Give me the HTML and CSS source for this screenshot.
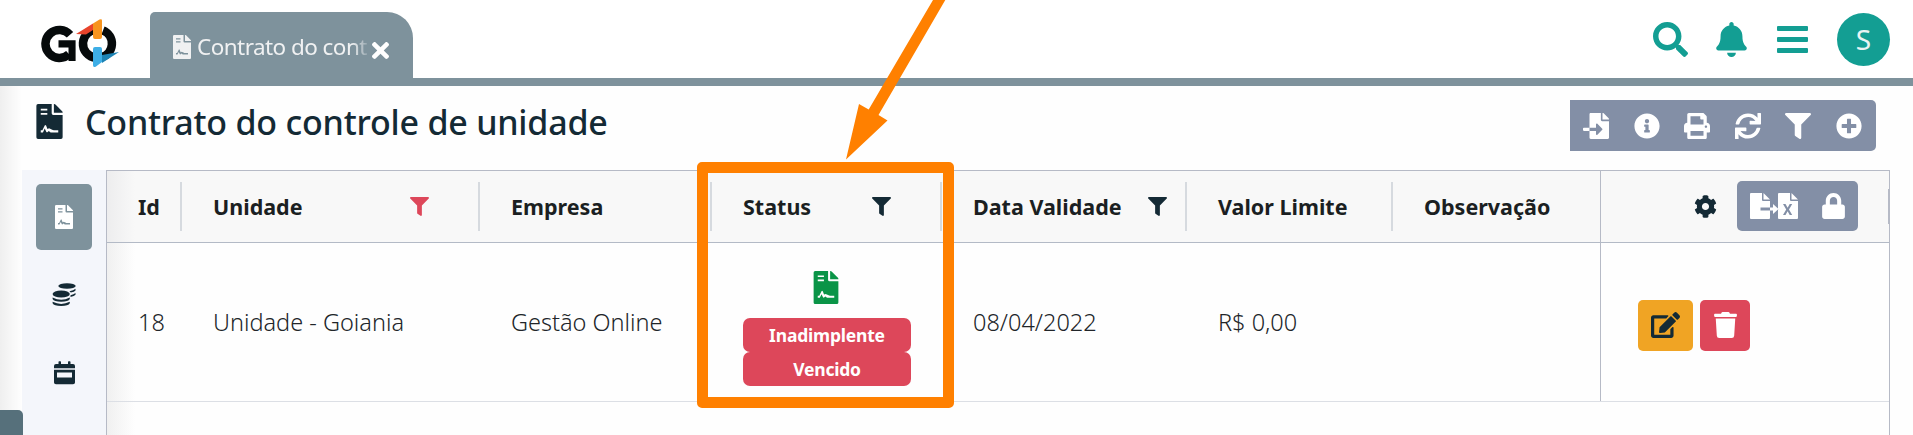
FILE: index.html
```html
<!DOCTYPE html>
<html lang="pt-BR">
<head>
<meta charset="utf-8">
<title>Contrato do controle de unidade</title>
<link rel="stylesheet" href="styles.css">
</head>
<body>
<svg class="defs" width="0" height="0">
  <symbol id="contract" viewBox="0 0 384 512"><path fill-rule="evenodd" d="M24 0H224V136Q224 160 248 160H384V488Q384 512 360 512H24Q0 512 0 488V24Q0 0 24 0ZM64 68V94H160V68ZM64 132V158H160V132ZM64 384V416H96L122 360L146 408Q152 418 162 412L182 396L208 416H320V384H258Q240 384 224 372L186 356L162 366L142 316Q132 296 122 316L88 384Z"/><path d="M256 0H262Q272 0 279 7L377 105Q384 112 384 122V128H256Z"/></symbol>
  <symbol id="filter" viewBox="0 0 512 512"><path d="M487.976 0H24.028C2.71 0-8.047 25.866 7.058 40.971L192 225.941V432c0 7.831 3.821 15.17 10.237 19.662l80 55.98C298.02 518.69 320 507.493 320 487.98V225.941l184.947-184.97C520.021 25.896 509.338 0 487.976 0z"/></symbol>
</svg>

<header class="topbar">
  <div class="logo">
    <svg width="80" height="50" viewBox="0 0 80 50">
      <path d="M29 16.700A14 14 0 1 0 28 36.200" fill="none" stroke="#060a0b" stroke-width="8.500"/>
      <path d="M17.500 22.200H34.600V43H27.500V29.500H17.500Z" fill="#060a0b"/>
      <path d="M57 11.700A14 14 0 0 0 55 39.700M62 12.500A14 14 0 0 1 60 39.200" fill="none" stroke="#060a0b" stroke-width="8.500"/>
      <path d="M51.500 17.500V34M61.500 17.500V34" fill="none" stroke="#fff" stroke-width="1"/>
      <path d="M35 16L52 5.500V12L45 16.500Z" fill="#e8442c"/>
      <path d="M52 5.500L58.500 1.500Q61 .5 61 2.500V19Q61 21 59 21H54Q52 21 52 19Z" fill="#f7941f"/>
      <path d="M61 37L78 34L61 45Z" fill="#1d83b4"/>
      <path d="M54 29H59Q61 29 61 31V44L55 48.500Q52 50 52 47V31Q52 29 54 29Z" fill="#3eaee6"/>
    </svg>
  </div>
  <div class="tab">
    <svg class="tab-icon"><use href="#contract"/></svg>
    <span class="tab-text">Contrato do cont</span>
    <svg class="tab-close" viewBox="0 80 352 352"><path d="M242.720 256l100.070-100.070c12.280-12.280 12.280-32.190 0-44.480l-22.240-22.240c-12.280-12.280-32.190-12.280-44.480 0L176 189.280 75.930 89.210c-12.280-12.280-32.190-12.280-44.480 0L9.210 111.450c-12.280 12.280-12.280 32.190 0 44.480L109.280 256 9.210 356.070c-12.280 12.280-12.280 32.190 0 44.480l22.240 22.240c12.280 12.280 32.200 12.280 44.480 0L176 322.720l100.070 100.070c12.280 12.280 32.200 12.280 44.480 0l22.240-22.240c12.280-12.280 12.280-32.190 0-44.480L242.720 256z"/></svg>
  </div>
  <div class="top-actions">
    <svg width="35" height="35" viewBox="0 0 512 512"><path d="M505 442.700L405.300 343c-4.500-4.500-10.600-7-17-7H372c27.600-35.300 44-79.700 44-128C416 93.100 322.900 0 208 0S0 93.100 0 208s93.100 208 208 208c48.300 0 92.700-16.400 128-44v16.300c0 6.400 2.500 12.500 7 17l99.700 99.700c9.400 9.400 24.600 9.400 33.900 0l28.300-28.300c9.400-9.400 9.400-24.600.1-34zM208 336c-70.700 0-128-57.200-128-128 0-70.700 57.200-128 128-128 70.700 0 128 57.200 128 128 0 70.700-57.200 128-128 128z"/></svg>
    <svg width="31" height="35" viewBox="0 0 448 512"><path d="M224 512c35.320 0 63.970-28.650 63.970-64H160.030c0 35.350 28.650 64 63.970 64zm215.390-149.710c-19.320-20.760-55.470-51.990-55.470-154.290 0-77.700-54.480-139.900-127.940-155.160V32c0-17.670-14.320-32-31.980-32s-31.980 14.330-31.980 32v20.840C118.560 68.100 64.080 130.300 64.080 208c0 102.300-36.150 133.530-55.470 154.290-6 6.450-8.660 14.160-8.610 21.710.11 16.400 12.980 32 32.100 32h383.800c19.120 0 32-15.600 32.100-32 .05-7.550-2.610-15.270-8.610-21.710z"/></svg>
    <svg width="31" height="27" viewBox="0 0 31 27"><path d="M1 0H30Q31 0 31 1V4Q31 5 30 5H1Q0 5 0 4V1Q0 0 1 0ZM1 11H30Q31 11 31 12V15Q31 16 30 16H1Q0 16 0 15V12Q0 11 1 11ZM1 22H30Q31 22 31 23V26Q31 27 30 27H1Q0 27 0 26V23Q0 22 1 22Z"/></svg>
    <div class="avatar">S</div>
  </div>
</header>

<div class="title-row">
  <svg class="title-icon"><use href="#contract"/></svg>
  <h1>Contrato do controle de unidade</h1>
  <div class="toolbar">
    <svg viewBox="0 0 512 512"><path d="M16 288c-8.800 0-16 7.200-16 16v32c0 8.800 7.200 16 16 16h112v-64zm489-183L407.100 7c-4.500-4.500-10.600-7-17-7H384v128h128v-6.100c0-6.300-2.500-12.400-7-16.900zm-153 31V0H152c-13.300 0-24 10.700-24 24v264h128v-65.200c0-14.300 17.300-21.400 27.400-11.300L379 308c6.600 6.700 6.600 17.400 0 24l-95.700 96.400c-10.100 10.100-27.400 3-27.400-11.300V352H128v136c0 13.300 10.700 24 24 24h336c13.300 0 24-10.700 24-24V160H376c-13.200 0-24-10.800-24-24z"/></svg>
    <svg viewBox="0 0 512 512"><path d="M256 8C119.043 8 8 119.083 8 256c0 136.997 111.043 248 248 248s248-111.003 248-248C504 119.083 392.957 8 256 8zm0 110c23.196 0 42 18.804 42 42s-18.804 42-42 42-42-18.804-42-42 18.804-42 42-42zm56 254c0 6.627-5.373 12-12 12h-88c-6.627 0-12-5.373-12-12v-24c0-6.627 5.373-12 12-12h12v-64h-12c-6.627 0-12-5.373-12-12v-24c0-6.627 5.373-12 12-12h64c6.627 0 12 5.373 12 12v100h12c6.627 0 12 5.373 12 12v24z"/></svg>
    <svg viewBox="0 0 512 512"><path d="M448 192V77.250c0-8.490-3.370-16.620-9.370-22.630L393.370 9.370c-6-6-14.140-9.370-22.630-9.370H96C78.330 0 64 14.330 64 32v160c-35.350 0-64 28.650-64 64v112c0 8.840 7.160 16 16 16h48v96c0 17.670 14.330 32 32 32h320c17.670 0 32-14.330 32-32v-96h48c8.840 0 16-7.160 16-16V256c0-35.350-28.650-64-64-64zm-64 256H128v-96h256v96zm0-224H128V64h192v48c0 8.840 7.160 16 16 16h48v96zm48 72c-13.250 0-24-10.750-24-24 0-13.260 10.750-24 24-24s24 10.740 24 24c0 13.250-10.750 24-24 24z"/></svg>
    <svg viewBox="0 0 512 512"><path d="M440.650 12.570l4 82.770A247.160 247.160 0 0 0 255.830 8C134.730 8 33.910 94.920 12.290 209.820A12 12 0 0 0 24.090 224h49.050a12 12 0 0 0 11.670-9.260 175.910 175.910 0 0 1 317-56.940l-101.460-4.860a12 12 0 0 0-12.570 12v47.410a12 12 0 0 0 12 12H500a12 12 0 0 0 12-12V12a12 12 0 0 0-12-12h-47.370a12 12 0 0 0-11.980 12.570zM255.830 432a175.610 175.610 0 0 1-146-77.800l101.800 4.870a12 12 0 0 0 12.570-12v-47.400a12 12 0 0 0-12-12H12a12 12 0 0 0-12 12V500a12 12 0 0 0 12 12h47.350a12 12 0 0 0 12-12.600l-4.150-82.570A247.170 247.170 0 0 0 255.830 504c121.110 0 221.930-86.920 243.550-201.820a12 12 0 0 0-11.800-14.180h-49.050a12 12 0 0 0-11.670 9.260A175.860 175.860 0 0 1 255.830 432z"/></svg>
    <svg><use href="#filter"/></svg>
    <svg viewBox="0 0 512 512"><path d="M256 8C119 8 8 119 8 256s111 248 248 248 248-111 248-248S393 8 256 8zm144 276c0 6.600-5.400 12-12 12h-92v92c0 6.600-5.400 12-12 12h-56c-6.600 0-12-5.400-12-12v-92h-92c-6.600 0-12-5.400-12-12v-56c0-6.600 5.400-12 12-12h92v-92c0-6.600 5.400-12 12-12h56c6.600 0 12 5.400 12 12v92h92c6.600 0 12 5.400 12 12v56z"/></svg>
  </div>
</div>

<main class="content">
  <nav class="side">
    <div class="side-item active"><svg width="18" height="24"><use href="#contract"/></svg></div>
    <div class="side-item"><svg width="24" height="24" viewBox="0 0 24 24"><ellipse cx="15" cy="3" rx="8.700" ry="2.800"/><path d="M17.500 8.200Q21.500 7.700 23.500 5.800V7.400Q22.500 9 18.800 9.600ZM18.500 12.200Q21.800 11.600 23.500 10V11.800Q22.500 13.400 18.500 14Z"/><ellipse cx="9.200" cy="11" rx="8.600" ry="3.600"/><path d="M.6 14.400Q9.200 19 17.800 14.400V16Q16.500 18.700 9.200 18.700T.6 16ZM.6 18.800Q9.200 23 17.800 18.800V20.300Q16.500 23 9.200 23T.6 20.300Z"/></svg></div>
    <div class="side-item"><svg width="21" height="24" viewBox="0 0 21 24"><path fill-rule="evenodd" d="M4.500 3V1Q4.500.3 5.200.3H6.300Q7 .3 7 1V3H14V1Q14 .3 14.700.3H15.800Q16.500.3 16.500 1V3H19Q21 3 21 5V7.300H0V5Q0 3 2 3ZM0 8.800H21V21.500Q21 23.300 19 23.300H2Q0 23.300 0 21.500ZM3 11.500V16.500H18V11.500Z"/></svg></div>
  </nav>
  <div class="grid">
    <div class="row head">
      <div class="cell c-id">Id</div>
      <div class="cell c-un"><span>Unidade</span><svg class="flt red"><use href="#filter"/></svg></div>
      <div class="cell c-em">Empresa</div>
      <div class="cell c-st"><span>Status</span><svg class="flt"><use href="#filter"/></svg></div>
      <div class="cell c-dt"><span>Data Validade</span><svg class="flt"><use href="#filter"/></svg></div>
      <div class="cell c-vl">Valor Limite</div>
      <div class="cell c-ob">Observação</div>
      <div class="cell c-ac">
        <svg class="gear" viewBox="0 0 512 512"><path d="M487.400 315.700l-42.600-24.600c4.300-23.200 4.300-47 0-70.200l42.600-24.600c4.900-2.800 7.100-8.600 5.500-14-11.100-35.600-30-67.800-54.700-94.600-3.800-4.100-10-5.100-14.800-2.300L380.800 110c-17.900-15.400-38.500-27.300-60.800-35.100V25.800c0-5.600-3.900-10.500-9.400-11.700-36.700-8.200-74.300-7.800-109.200 0-5.500 1.200-9.400 6.100-9.400 11.700V75c-22.200 7.900-42.800 19.800-60.800 35.100L88.700 85.500c-4.900-2.800-11-1.900-14.800 2.300-24.700 26.700-43.600 58.900-54.700 94.600-1.700 5.400.6 11.200 5.500 14L67.300 221c-4.300 23.200-4.300 47 0 70.200l-42.600 24.600c-4.900 2.800-7.100 8.600-5.500 14 11.100 35.600 30 67.800 54.700 94.600 3.800 4.100 10 5.100 14.800 2.300l42.600-24.600c17.900 15.400 38.500 27.300 60.800 35.100v49.200c0 5.600 3.900 10.500 9.400 11.700 36.700 8.200 74.300 7.800 109.200 0 5.500-1.200 9.400-6.100 9.400-11.700v-49.200c22.200-7.900 42.800-19.800 60.800-35.100l42.600 24.600c4.900 2.800 11 1.900 14.800-2.300 24.700-26.700 43.600-58.900 54.700-94.600 1.500-5.500-.7-11.300-5.600-14.100zM256 336c-44.100 0-80-35.900-80-80s35.900-80 80-80 80 35.900 80 80-35.900 80-80 80z"/></svg>
        <div class="export">
          <svg width="48" height="26" viewBox="0 0 48 26"><path fill-rule="evenodd" d="M1 0H12V7Q12 8 13 8H20V14.500H10.500V17.500H20V25Q20 26 19 26H1Q0 26 0 25V1Q0 0 1 0ZM13.500 0L20 6.500H13.500ZM20 14.500H23V11L28.500 16L23 21V17.500H20ZM29 0H40V7Q40 8 41 8H48V25Q48 26 47 26H29Q28 26 28 25V1Q28 0 29 0ZM41.500 0L48 6.500H41.500ZM33 11L36.200 16.500L33 22H35.500L37.600 18.300L39.700 22H42.200L39 16.500L42.200 11H39.700L37.600 14.700L35.500 11Z"/></svg>
          <svg width="23" height="26" viewBox="0 0 448 512"><path d="M400 224h-24v-72C376 68.200 307.800 0 224 0S72 68.200 72 152v72H48c-26.500 0-48 21.500-48 48v192c0 26.500 21.500 48 48 48h352c26.500 0 48-21.500 48-48V272c0-26.500-21.500-48-48-48zm-104 0H152v-72c0-39.700 32.300-72 72-72s72 32.300 72 72v72z"/></svg>
        </div>
      </div>
    </div>
    <div class="row body">
      <div class="cell c-id">18</div>
      <div class="cell c-un">Unidade - Goiania</div>
      <div class="cell c-em">Gestão Online</div>
      <div class="cell c-st">
        <svg class="status-icon"><use href="#contract"/></svg>
        <div class="badge">Inadimplente</div>
        <div class="badge">Vencido</div>
      </div>
      <div class="cell c-dt">08/04/2022</div>
      <div class="cell c-vl">R$ 0,00</div>
      <div class="cell c-ob"></div>
      <div class="cell c-ac">
        <div class="btn edit"><svg width="29" height="26" viewBox="0 0 576 512"><path d="M402.600 83.200l90.200 90.200c3.800 3.800 3.800 10 0 13.800L274.400 405.600l-92.800 10.300c-12.400 1.400-22.900-9.100-21.500-21.500l10.300-92.800L388.800 83.200c3.800-3.800 10-3.800 13.800 0zm162-22.900l-48.800-48.800c-15.200-15.200-39.900-15.200-55.200 0l-35.400 35.400c-3.800 3.800-3.800 10 0 13.800l90.200 90.200c3.800 3.800 10 3.800 13.800 0l35.400-35.400c15.200-15.300 15.200-40 0-55.200zM384 346.200V448H64V128h229.800c3.200 0 6.200-1.300 8.500-3.500l40-40c7.600-7.600 2.200-20.500-8.500-20.500H48C21.500 64 0 85.500 0 112v352c0 26.500 21.500 48 48 48h352c26.500 0 48-21.500 48-48V306.200c0-10.700-12.900-16-20.500-8.500l-40 40c-2.200 2.300-3.500 5.300-3.500 8.500z"/></svg></div>
        <div class="btn del"><svg width="23" height="26" viewBox="0 0 448 512"><path d="M432 32H312l-9.400-18.700A24 24 0 0 0 281.100 0H166.800a23.720 23.720 0 0 0-21.400 13.300L136 32H16A16 16 0 0 0 0 48v32a16 16 0 0 0 16 16h416a16 16 0 0 0 16-16V48a16 16 0 0 0-16-16zM53.200 467a48 48 0 0 0 47.900 45h245.800a48 48 0 0 0 47.900-45L416 128H32z"/></svg></div>
      </div>
    </div>
  </div>
</main>
<div class="edge-shadow"></div>
<div class="corner"></div>
<div class="highlight"></div>
<svg class="arrow" width="120" height="160" viewBox="840 0 120 160"><path d="M933 0H945.300L878.500 115L887.500 120.500L846 159.500L859 104L868.700 109.500Z"/></svg>
</body>
</html>
```

FILE: styles.css
```css
* { box-sizing: border-box; }
body { margin: 0; width: 1913px; height: 435px; overflow: hidden; position: relative; background: #fefefe; color: #212529; font-family: "Noto Sans", "Open Sans", sans-serif; }
svg { display: block; flex: none; fill: currentColor; }
.defs { position: absolute; }
.topbar { display: flex; height: 86px; background: #fff; border-bottom: 8px solid #7e929c; }
.logo { width: 150px; padding: 18px 0 0 41px; }
.tab { width: 263px; height: 66px; margin-top: 12px; padding: 4px 24px 0 23px; display: flex; align-items: center; background: #7e929c; border-radius: 5px 26px 0 0; color: #f0f1f2; }
.tab-icon { width: 18px; height: 24px; }
.tab-text { width: 173px; height: 36px; margin-left: 6px; white-space: nowrap; font-size: 22.500px; line-height: 36px; letter-spacing: -.55px; -webkit-mask-image: linear-gradient(90deg, #000 155px, transparent 175px); mask-image: linear-gradient(90deg, #000 155px, transparent 175px); }
.tab-close { width: 17px; height: 17px; margin: 6px 0 0 2px; color: #fff; }
.top-actions { margin-left: auto; height: 78px; padding-right: 23px; display: flex; align-items: center; color: #139e93; }
.top-actions svg:nth-child(2) { margin-left: 28px; }
.top-actions svg:nth-child(3) { margin-left: 30px; }
.avatar { width: 53px; height: 53px; margin-left: 29px; border-radius: 50%; background: #139e93; color: #e9f4f3; font-size: 28px; line-height: 53px; text-align: center; }
.title-row { display: flex; height: 84px; padding: 14px 37px 0 36px; color: #142a35; }
.title-icon { width: 27px; height: 35px; margin-top: 4px; }
h1 { margin: -2px 0 0 22px; font-size: 34px; line-height: 48px; font-weight: 500; letter-spacing: -.22px; white-space: nowrap; }
.toolbar { margin-left: auto; width: 306px; height: 51px; padding: 0 14px 0 13px; display: flex; align-items: center; justify-content: space-between; background: #838fa6; border-radius: 0 5px 5px 0; color: #fff; }
.toolbar svg { width: 26px; height: 26px; }
.content { display: flex; height: 265px; padding-left: 22px; }
.side { width: 84px; padding-top: 14px; display: flex; flex-direction: column; align-items: center; gap: 12px; background: #f4f6fb; color: #142a35; }
.side-item { width: 56px; height: 66px; display: flex; align-items: center; justify-content: center; border-radius: 5px; }
.side-item.active { background: #7e929c; color: #fff; }
.grid { width: 1784px; border: 1px solid #b6bac6; border-bottom: 0; background: linear-gradient(90deg, #f0f0f0, #fefefe 28px); }
.row { display: flex; white-space: nowrap; }
.cell { display: flex; align-items: center; }
.head { height: 72px; border-bottom: 1px solid #b3bac6; background: linear-gradient(90deg, #ededee, #f8f8f8 28px); font-weight: 700; font-size: 21.500px; color: #1b1f22; }
.body { height: 159px; border-bottom: 1px solid #dcdfe5; font-size: 23.500px; font-weight: 300; }
.c-id { width: 75px; padding-left: 31px; }
.c-un { width: 298px; padding-left: 31px; }
.c-em { width: 232px; padding-left: 31px; }
.c-st { width: 230px; padding-left: 31px; }
.c-dt { width: 245px; padding-left: 31px; }
.c-vl { width: 206px; padding-left: 31px; }
.c-ob { width: 207px; padding-left: 31px; }
.c-ac { flex: 1; border-left: 1px solid #b6bac6; }
.head .cell:not(.c-ac):not(.c-ob) { background: linear-gradient(#d6dadf, #d6dadf) right center / 2px 49px no-repeat; }
.head .c-ac { padding-left: 93px; background: linear-gradient(#b6bac6, #b6bac6) right center / 1px 35px no-repeat; }
.flt { width: 19px; height: 19px; margin-left: auto; color: #142a35; }
.flt.red { color: #dd475a; }
.c-un .flt { margin-right: 51px; }
.c-st .flt { margin-right: 51px; }
.c-dt .flt { margin-right: 20px; }
.gear { width: 23px; height: 23px; color: #142a35; }
.export { width: 121px; height: 50px; margin: -2px 0 0 20px; padding: 0 13px; display: flex; align-items: center; justify-content: space-between; border-radius: 5px; background: #838fa6; color: #fff; }
.body .c-st { flex-direction: column; align-items: flex-start; padding-top: 28px; }
.status-icon { width: 26px; height: 33px; margin: 0 0 14px 70px; color: #0a9447; }
.badge { width: 168px; height: 34px; border-radius: 7px; background: #dd475a; color: #fff; font-size: 17.500px; font-weight: 700; line-height: 35px; letter-spacing: -.2px; text-align: center; }
.body .c-ac { padding: 6px 0 0 37px; gap: 7px; }
.btn { height: 51px; display: flex; align-items: center; justify-content: center; border-radius: 5px; }
.edit { width: 55px; background: #f0a424; color: #142a35; }
.del { width: 50px; background: #dd475a; color: #fff; }
.edge-shadow { position: absolute; left: 0; top: 86px; width: 22px; height: 349px; background: linear-gradient(90deg, rgba(0,0,0,.06), transparent); }
.corner { position: absolute; left: 0; top: 410px; width: 23px; height: 25px; border-radius: 0 5px 0 0; background: #56707b; }
.highlight { position: absolute; left: 697px; top: 162px; width: 257px; height: 246px; border: 11px solid #ff8000; border-radius: 5px; }
.arrow { position: absolute; left: 840px; top: 0; fill: #ff8000; }
```
